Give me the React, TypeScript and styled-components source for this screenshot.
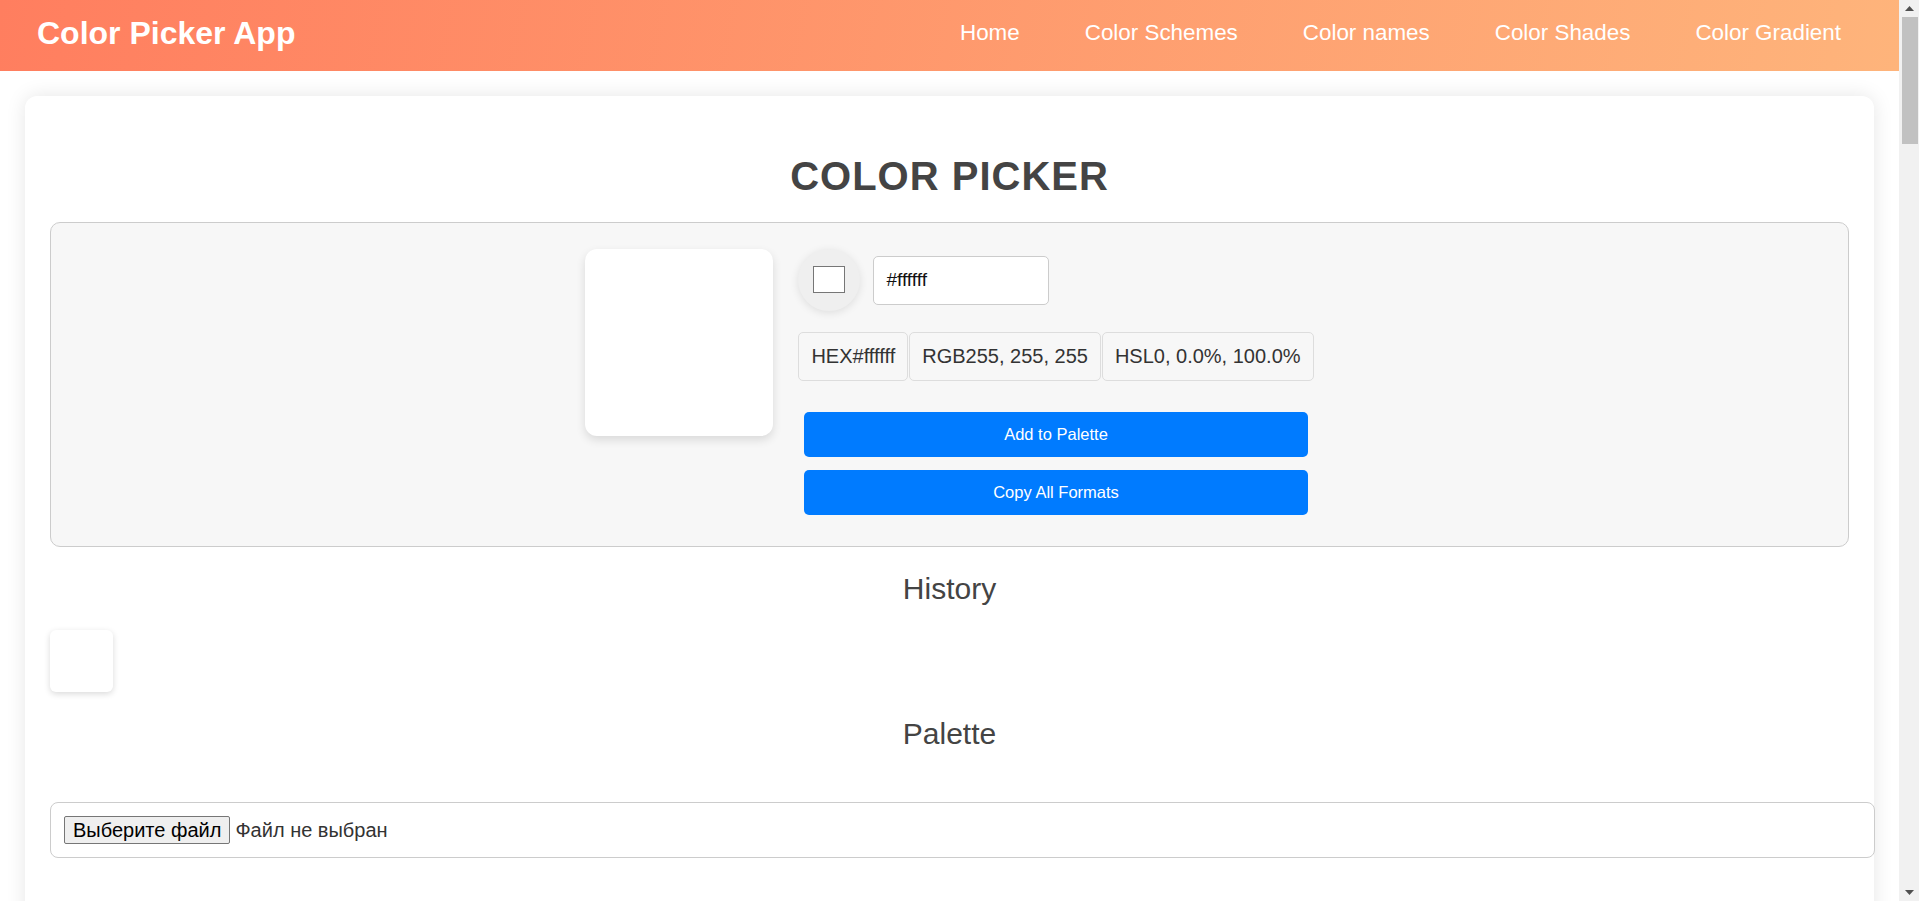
import React from "react";
import styled, { createGlobalStyle } from "styled-components";

const GlobalStyle = createGlobalStyle`
  body {
    margin: 0;
    background: #ffffff;
    font-family: "Liberation Sans", Arial, sans-serif;
    color: #333;
  }
  * {
    font-family: "Liberation Sans", Arial, sans-serif;
  }
`;

const Shell = styled.div`
  display: flex;
  align-items: flex-start;
`;

const PageColumn = styled.div`
  flex: 1;
  min-width: 0;
`;

const ScrollRail = styled.div`
  flex-shrink: 0;
  width: 20px;
  height: 100vh;
  background: #f1f1f1;
  display: flex;
  flex-direction: column;
`;

const RailButton = styled.div`
  height: 17px;
  display: flex;
  align-items: center;
  justify-content: center;
  padding-left: 1px;
`;

const RailThumb = styled.div`
  height: 127px;
  margin: 0 1px 0 3px;
  background: #c1c1c1;
`;

const RailSpacer = styled.div`
  flex: 1;
`;

const Header = styled.header`
  height: 71px;
  box-sizing: border-box;
  padding: 0 58px 5px 37px;
  display: flex;
  align-items: center;
  justify-content: space-between;
  background: linear-gradient(100deg, #ff7e5f 0%, #feb47b 100%);
`;

const Brand = styled.h1`
  margin: 0;
  font-size: 32px;
  font-weight: 700;
  color: #ffffff;
`;

const Nav = styled.nav`
  display: flex;
  gap: 65px;
`;

const NavLink = styled.a`
  font-size: 22.4px;
  color: #ffffff;
  text-decoration: none;
`;

const Card = styled.main`
  margin: 25px;
  padding: 25px;
  min-height: 1200px;
  background: #ffffff;
  border-radius: 12px;
  box-shadow: 0 0 20px rgba(0, 0, 0, 0.1);
`;

const Title = styled.h1`
  margin: 33px 0 23px;
  text-align: center;
  font-size: 40px;
  font-weight: 700;
  letter-spacing: 1px;
  color: #444;
`;

const PickerPanel = styled.section`
  display: flex;
  justify-content: center;
  align-items: flex-start;
  gap: 25px;
  padding: 26px 25px 25px;
  background: #f7f7f7;
  border: 1px solid #ccc;
  border-radius: 10px;
`;

const BigSwatch = styled.div<{ $color: string }>`
  width: 188px;
  height: 187px;
  border-radius: 12px;
  background: ${(p) => p.$color};
  box-shadow: 0 4px 10px rgba(0, 0, 0, 0.12);
`;

const Controls = styled.div`
  display: flex;
  flex-direction: column;
`;

const InputRow = styled.div`
  display: flex;
  align-items: center;
  gap: 13px;
`;

const ColorCircle = styled.div`
  width: 62px;
  height: 62px;
  border-radius: 50%;
  background: #efefef;
  box-shadow: 0 2px 8px rgba(0, 0, 0, 0.1);
  display: flex;
  align-items: center;
  justify-content: center;
`;

const ColorWell = styled.div<{ $color: string }>`
  width: 30px;
  height: 25px;
  margin-top: -1px;
  background: ${(p) => p.$color};
  border: 1px solid #767676;
`;

const HexInput = styled.input`
  width: 176px;
  height: 49px;
  box-sizing: border-box;
  padding: 0 12px;
  font-size: 19px;
  font-weight: 400;
  color: #111;
  background: #fff;
  border: 1px solid #ccc;
  border-radius: 5px;
  outline: none;
`;

const FormatRow = styled.div`
  display: flex;
  gap: 1px;
  margin-top: 21px;
`;

const FormatChip = styled.div`
  padding: 12px 12px;
  font-size: 20px;
  line-height: 23px;
  color: #333;
  background: #f7f7f7;
  border: 1px solid #ddd;
  border-radius: 5px;
  white-space: nowrap;
`;

const ButtonStack = styled.div`
  display: flex;
  flex-direction: column;
  gap: 13px;
  padding: 6px;
  margin-top: 25px;
`;

const ActionButton = styled.button`
  height: 45px;
  border: none;
  border-radius: 5px;
  background: #007bff;
  color: #ffffff;
  font-size: 16.5px;
  cursor: pointer;
`;

const SectionTitle = styled.h2<{ $top: number; $bottom: number }>`
  margin: ${(p) => p.$top}px 0 ${(p) => p.$bottom}px;
  text-align: center;
  font-size: 30px;
  font-weight: 400;
  color: #444;
`;

const SwatchList = styled.div`
  display: flex;
  flex-wrap: wrap;
  gap: 10px;
  min-height: 26px;
`;

const SmallSwatch = styled.div<{ $color: string }>`
  width: 63px;
  height: 62px;
  border-radius: 6px;
  background: ${(p) => p.$color};
  box-shadow: 0 2px 6px rgba(0, 0, 0, 0.15);
`;

const ImportBox = styled.div`
  width: 100%;
  height: 30px;
  padding: 12px;
  display: flex;
  align-items: center;
  border: 1px solid #ccc;
  border-radius: 8px;
`;

const FileButton = styled.button`
  height: 28px;
  padding: 0 8px;
  margin-left: 1px;
  font-size: 20px;
  color: #000;
  background: #efefef;
  border: 1px solid #767676;
  border-radius: 2px;
`;

const FileLabel = styled.span`
  margin-left: 5px;
  font-size: 20px;
  color: #333;
`;

const Arrow = ({ up }: { up: boolean }) => (
  <svg width="9" height="5" viewBox="0 0 9 5">
    <polygon points={up ? "0,5 4.5,0 9,5" : "0,0 9,0 4.5,5"} fill="#505050" />
  </svg>
);

export default function App() {
  const color = "#ffffff";
  const navItems = ["Home", "Color Schemes", "Color names", "Color Shades", "Color Gradient"];
  const history = ["#ffffff"];
  return (
    <>
      <GlobalStyle />
      <Shell>
        <PageColumn>
          <Header>
            <Brand>Color Picker App</Brand>
            <Nav>
              {navItems.map((n) => (
                <NavLink key={n} href="#">
                  {n}
                </NavLink>
              ))}
            </Nav>
          </Header>
          <Card>
            <Title>COLOR PICKER</Title>
            <PickerPanel>
              <BigSwatch $color={color} />
              <Controls>
                <InputRow>
                  <ColorCircle>
                    <ColorWell $color={color} />
                  </ColorCircle>
                  <HexInput defaultValue={color} />
                </InputRow>
                <FormatRow>
                  <FormatChip>HEX#ffffff</FormatChip>
                  <FormatChip>RGB255, 255, 255</FormatChip>
                  <FormatChip>HSL0, 0.0%, 100.0%</FormatChip>
                </FormatRow>
                <ButtonStack>
                  <ActionButton>Add to Palette</ActionButton>
                  <ActionButton>Copy All Formats</ActionButton>
                </ButtonStack>
              </Controls>
            </PickerPanel>
            <SectionTitle $top={25} $bottom={24}>History</SectionTitle>
            <SwatchList>
              {history.map((c, i) => (
                <SmallSwatch key={i} $color={c} />
              ))}
            </SwatchList>
            <SectionTitle $top={25} $bottom={25}>Palette</SectionTitle>
            <SwatchList />
            <ImportBox>
              <FileButton>Выберите файл</FileButton>
              <FileLabel>Файл не выбран</FileLabel>
            </ImportBox>
          </Card>
        </PageColumn>
        <ScrollRail>
          <RailButton>
            <Arrow up />
          </RailButton>
          <RailThumb />
          <RailSpacer />
          <RailButton>
            <Arrow up={false} />
          </RailButton>
        </ScrollRail>
      </Shell>
    </>
  );
}
